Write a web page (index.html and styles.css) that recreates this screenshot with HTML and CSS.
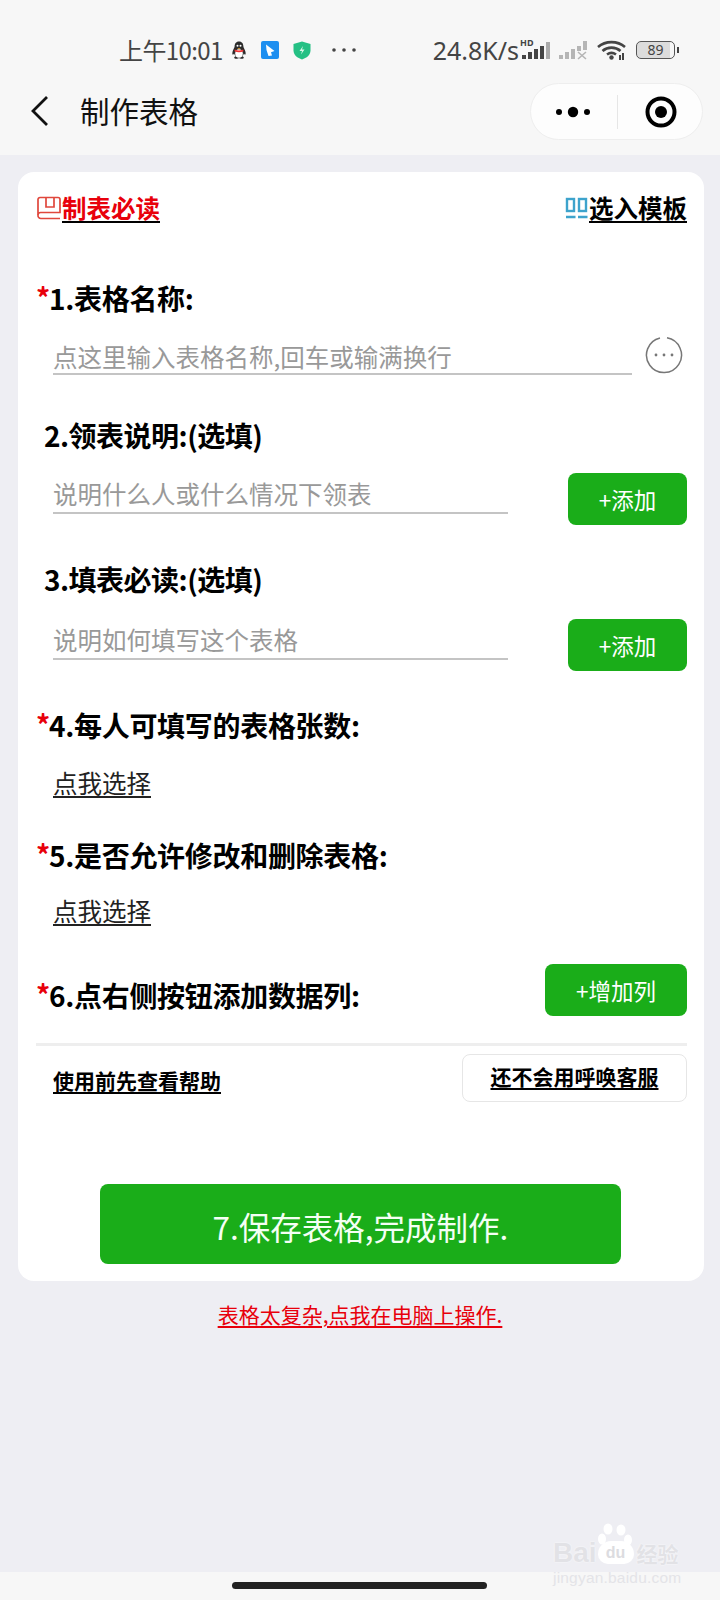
FILE: index.html
```html
<!DOCTYPE html>
<html lang="zh-CN">
<head>
<meta charset="utf-8">
<title>制作表格</title>
<link rel="stylesheet" href="styles.css">
</head>
<body>
<div class="page">
  <header class="top">
    <div class="status">
      <span class="clock">上午10:01</span>
      <svg class="ic-qq" width="16" height="19" viewBox="0 0 16 19"><path d="M8 0.5C4.8 0.5 3.6 3 3.6 5.5 3.6 6.8 2 8.6 1.5 11c-.4 1.8 0 3 .6 2.8l1-1.2c.3 1 .9 2 1.7 2.6-1 .4-1.8 1-1.6 1.8.2.8 2.300 .9 3.600 .5.400-.1.800-.2 1.200-.2s.8.100 1.200.2c1.300.4 3.400.3 3.600-.5.200-.8-.6-1.400-1.600-1.800.8-.6 1.400-1.600 1.700-2.600l1 1.200c.6.200 1-1 .6-2.800C14 8.600 12.400 6.800 12.400 5.500 12.400 3 11.200.5 8 .5z" fill="#2b2b2b"/><ellipse cx="8" cy="12.500" rx="3.800" ry="4.300" fill="#fff"/><path d="M3.800 8.500c2.500 1.300 5.900 1.300 8.400 0l.3 1.800c-2.800 1.200-6.200 1.200-9 0z" fill="#e33"/><path d="M6.300 7.300h3.400L8 8.500z" fill="#f5a623"/><circle cx="6.500" cy="4.800" r="1" fill="#fff"/><circle cx="9.500" cy="4.800" r="1" fill="#fff"/></svg>
      <svg class="ic-blue" width="18" height="18" viewBox="0 0 18 18"><rect width="18" height="18" rx="2" fill="#1e8ff0"/><path d="M5 3.500 13.500 10 10 11.200 11 14.500 7.500 15 5.500 9z" fill="#fff"/></svg>
      <svg class="ic-shield" width="18" height="19" viewBox="0 0 18 19"><path d="M9 0.500 17.500 3V9.500C17.500 14 13.500 17 9 18.500 4.500 17 .5 14 .5 9.500V3z" fill="#25c084"/><path d="M10 5 6.500 10H9L8 13.500 11.500 8.500H9z" fill="#d6f7e8"/></svg>
      <svg class="ic-more" width="24" height="4" viewBox="0 0 24 4"><circle cx="2" cy="2" r="1.800" fill="#444"/><circle cx="12" cy="2" r="1.800" fill="#444"/><circle cx="22" cy="2" r="1.800" fill="#444"/></svg>
      <div class="status-right">
        <span class="speed">24.8K/s</span>
        <div class="sim1-wrap">
          <span class="hd">HD</span>
          <svg class="sim1" width="33" height="20" viewBox="0 0 33 20"><rect x="3" y="15" width="4" height="4" fill="#444"/><rect x="9" y="12" width="4" height="7" fill="#444"/><rect x="15" y="9" width="4" height="10" fill="#444"/><rect x="21" y="6" width="4" height="13" fill="#444"/><rect x="27" y="2" width="4" height="17" fill="#aaa"/></svg>
        </div>
        <svg class="sim2" width="30" height="20" viewBox="0 0 30 20"><rect x="0" y="15" width="4" height="4" fill="#b5b5b5"/><rect x="6" y="12" width="4" height="7" fill="#b5b5b5"/><rect x="12" y="9" width="4" height="10" fill="#b5b5b5"/><rect x="18" y="6" width="4" height="5" fill="#b5b5b5"/><rect x="24" y="1" width="4" height="9" fill="#b5b5b5"/><path d="M19 12l8 7M27 12l-8 7" stroke="#b5b5b5" stroke-width="1.600"/></svg>
        <svg class="wifi" width="29" height="20" viewBox="0 0 29 20"><path d="M1 7C8.500 .5 20.500 .5 28 7" fill="none" stroke="#444" stroke-width="2.600"/><path d="M5.500 11C10.500 6.500 18.500 6.500 23.500 11" fill="none" stroke="#444" stroke-width="2.600"/><path d="M10 14.500c2.700-2 6.300-2 9 0" fill="none" stroke="#444" stroke-width="2.600"/><circle cx="14.500" cy="17.500" r="2.200" fill="#444"/><rect x="22" y="15" width="2" height="5" fill="#444"/><rect x="25" y="13" width="2" height="7" fill="#444"/></svg>
        <div class="battery"><div class="battery-body"><span class="battery-num">89</span></div><div class="battery-tip"></div></div>
      </div>
    </div>
    <div class="nav">
      <svg class="back" width="19" height="32" viewBox="0 0 19 32"><path d="M17 2 3 16l14 14" fill="none" stroke="#111" stroke-width="2.800"/></svg>
      <span class="nav-title">制作表格</span>
      <div class="capsule">
        <svg class="cap-dots" width="34" height="12" viewBox="0 0 34 12"><circle cx="3" cy="6" r="3" fill="#000"/><circle cx="17" cy="6" r="5.200" fill="#000"/><circle cx="31" cy="6" r="3" fill="#000"/></svg>
        <div class="cap-line"></div>
        <svg class="cap-target" width="32" height="32" viewBox="0 0 32 32"><circle cx="16" cy="16" r="13.500" fill="none" stroke="#000" stroke-width="4"/><circle cx="16" cy="16" r="6" fill="#000"/></svg>
      </div>
    </div>
  </header>

  <main class="card">
    <div class="toolbar">
      <div class="tool">
        <svg class="tool-icon" width="25" height="24" viewBox="0 0 25 24"><path d="M2 18.500V3.500A2 2 0 0 1 4 1.500H22A2 2 0 0 1 24 3.500V16.500H4.500A2.500 2.500 0 0 0 2 19 3 3 0 0 0 5 22.500H24" fill="none" stroke="#e0473c" stroke-width="1.700"/><path d="M10 2V11H18V2" fill="none" stroke="#e0473c" stroke-width="1.700"/></svg>
        <a class="tool-link red">制表必读</a>
      </div>
      <div class="tool">
        <svg class="tool-icon" width="23" height="24" viewBox="0 0 23 24"><rect x="2" y="3" width="7" height="12" fill="none" stroke="#3da3cc" stroke-width="2.400"/><rect x="14" y="3" width="7" height="12" fill="none" stroke="#3da3cc" stroke-width="2.400"/><path d="M1 21h9.500M13 21h9.500" stroke="#3da3cc" stroke-width="2.400"/></svg>
        <a class="tool-link">选入模板</a>
      </div>
    </div>

    <h2 class="label label-1"><span class="star">*</span>1.表格名称:</h2>
    <div class="name-row">
      <div class="field field-wide">点这里输入表格名称,回车或输满换行</div>
      <svg class="more-circle" width="38" height="38" viewBox="0 0 38 38"><path d="M22 1.800A17.500 17.500 0 1 1 15 2" fill="none" stroke="#777" stroke-width="1.500"/><circle cx="11" cy="19" r="1.400" fill="#777"/><circle cx="19" cy="19" r="1.400" fill="#777"/><circle cx="27" cy="19" r="1.400" fill="#777"/></svg>
    </div>

    <h2 class="label label-plain label-2">2.领表说明:(选填)</h2>
    <div class="add-row">
      <div class="field field-short">说明什么人或什么情况下领表</div>
      <button class="btn btn-add">+添加</button>
    </div>

    <h2 class="label label-plain label-3">3.填表必读:(选填)</h2>
    <div class="add-row add-row-3">
      <div class="field field-short">说明如何填写这个表格</div>
      <button class="btn btn-add">+添加</button>
    </div>

    <h2 class="label label-4"><span class="star">*</span>4.每人可填写的表格张数:</h2>
    <a class="choice choice-4">点我选择</a>

    <h2 class="label label-5"><span class="star">*</span>5.是否允许修改和删除表格:</h2>
    <a class="choice choice-5">点我选择</a>

    <div class="col-row">
      <h2 class="label label-6"><span class="star">*</span>6.点右侧按钮添加数据列:</h2>
      <button class="btn btn-col">+增加列</button>
    </div>

    <div class="divider"></div>

    <div class="help-row">
      <a class="help-link">使用前先查看帮助</a>
      <button class="service"><span class="service-text">还不会用呼唤客服</span></button>
    </div>

    <button class="save">7.保存表格,完成制作.</button>
  </main>

  <a class="pc-link">表格太复杂,点我在电脑上操作.</a>

  <div class="bottom-bar"><div class="home"></div></div>

  <div class="watermark">
    <svg class="paw" width="40" height="24" viewBox="0 0 40 24"><ellipse cx="12" cy="6" rx="4.500" ry="5.500" fill="#fff"/><ellipse cx="25" cy="7" rx="4.500" ry="5.500" fill="#fff"/><ellipse cx="6" cy="16" rx="4" ry="5.500" fill="#fff"/><ellipse cx="32" cy="17" rx="4" ry="5.500" fill="#fff"/></svg>
    <div class="wm-line"><span class="wm-bai">Bai</span><span class="wm-du">du</span><span class="wm-cn">经验</span></div>
    <div class="wm-url">jingyan.baidu.com</div>
  </div>
</div>
</body>
</html>
```
FILE: styles.css
```css
* { box-sizing: border-box; }
html, body { margin: 0; padding: 0; }
body { font-family: "Noto Sans CJK SC", "Noto Sans", sans-serif; color: #000; background: #eeeef3; }
.page { position: relative; width: 720px; height: 1600px; overflow: hidden; display: flex; flex-direction: column; background: #eeeef3; }
a { display: block; }
button { font-family: inherit; border: 0; margin: 0; padding: 0; }
h2 { margin: 0; }

.top { height: 155px; flex: none; background: #f7f7f7; }
.status { height: 83px; padding: 17px 41px 0 119px; display: flex; align-items: center; color: #444; }
.clock { font-size: 24px; line-height: 34px; width: 105px; white-space: nowrap; letter-spacing: -0.6px; }
.ic-qq { margin-left: 7px; }
.ic-blue { margin-left: 14px; }
.ic-shield { margin-left: 14px; }
.ic-more { margin-left: 21px; }
.status-right { margin-left: auto; display: flex; align-items: center; flex: none; }
.speed { flex: none; font-family: "Noto Sans", sans-serif; font-size: 25px; line-height: 36px; white-space: nowrap; }
.sim1-wrap { position: relative; flex: none; width: 33px; height: 20px; }
.hd { position: absolute; left: 1px; top: -3px; font: 700 9px/12px "Noto Sans", sans-serif; color: #444; white-space: nowrap; }
.sim1 { display: block; }
.sim2 { margin-left: 7px; }
.wifi { margin-left: 8px; }
.battery { margin-left: 10px; display: flex; align-items: center; }
.battery-body { width: 39px; height: 18px; border: 1.500px solid #555; border-radius: 5px; background: linear-gradient(90deg, #dcdcdc 88%, transparent 88%); display: flex; align-items: center; justify-content: center; }
.battery-num { font-family: "Noto Sans", sans-serif; font-size: 14px; line-height: 16px; color: #444; }
.battery-tip { width: 2px; height: 6px; margin-left: 2px; background: #444; }

.nav { height: 72px; display: flex; align-items: center; padding: 0 17px 15px 30px; }
.back { flex: none; margin-top: -1px; }
.nav-title { margin: -3px 0 0 31px; font-size: 29.500px; line-height: 40px; color: #111; }
.capsule { margin-left: auto; width: 173px; height: 57px; border: 1px solid #eeeeee; border-radius: 29px; background: #fdfdfd; display: flex; align-items: center; padding-left: 25px; }
.cap-line { width: 1px; height: 34px; background: #e6e6e6; margin-left: 27px; }
.cap-target { margin-left: 27px; }

.card { flex: none; width: 686px; height: 1109px; margin: 17px 0 0 18px; padding: 20px 17px 0 18px; background: #fff; border-radius: 16px; }
.toolbar { height: 32px; display: flex; justify-content: space-between; align-items: center; }
.tool { display: flex; align-items: center; }
.tool-icon { flex: none; margin-right: 1px; }
.tool-link { font-size: 24.500px; line-height: 32px; font-weight: 700; text-decoration: underline; text-underline-offset: 3px; color: #000; }
.red { color: #e8000b; text-decoration-color: #000; }

.label { font-size: 28px; line-height: 36px; font-weight: 700; white-space: nowrap; letter-spacing: -0.3px; }
.star { display: inline-block; width: 13px; color: #e8000b; font-size: 28px; position: relative; top: -1px; }
.label-plain { padding-left: 8px; letter-spacing: -0.5px; }
.label-1 { margin-top: 56px; }
.label-2 { margin-top: 42px; }
.label-3 { margin-top: 36px; }
.label-4 { margin-top: 36px; }
.label-5 { margin-top: 36px; }

.field { font-size: 24.500px; line-height: 35px; height: 36px; color: #999; border-bottom: 2px solid #c4c4c4; white-space: nowrap; }
.field-wide { width: 579px; }
.field-short { width: 455px; margin-top: 5px; line-height: 31px; }

.name-row { margin: 23px 0 0 17px; display: flex; }
.more-circle { margin: -3px 0 0 13px; }

.add-row { margin: 20px 0 0 17px; display: flex; justify-content: space-between; }
.add-row-3 { margin-top: 22px; }
.btn { height: 52px; background: #1aad19; color: #fff; font-size: 22.500px; border-radius: 8px; }
.btn-add { width: 119px; }
.btn-col { width: 142px; }

.choice { font-size: 24.500px; line-height: 36px; width: max-content; margin-left: 17px; text-decoration: underline; text-underline-offset: 3px; color: #222; }
.choice-4 { margin-top: 22px; }
.choice-5 { margin-top: 20px; }

.col-row { margin-top: 35px; display: flex; justify-content: space-between; }
.label-6 { margin-top: 13px; }

.divider { height: 3px; margin-top: 27px; background: #eeeeee; }

.help-row { margin-top: 8px; display: flex; justify-content: space-between; }
.help-link { margin: 11px 0 0 17px; font-size: 21px; line-height: 30px; font-weight: 700; text-decoration: underline; text-underline-offset: 3px; }
.service { width: 225px; height: 48px; padding-bottom: 4px; background: #fff; border: 1px solid #e6e6e6; border-radius: 8px; font-size: 21px; font-weight: 700; color: #000; text-align: center; }
.service-text { text-decoration: underline; text-underline-offset: 3px; }

.save { display: block; width: 521px; height: 80px; margin: 82px 0 0 64px; padding-top: 3px; background: #1aad19; color: #f4fff4; font-size: 31.500px; border-radius: 8px; }

.pc-link { flex: none; margin-top: 18px; text-align: center; font-size: 21px; line-height: 30px; color: #e8000b; text-decoration: underline; text-underline-offset: 3px; }

.bottom-bar { position: absolute; left: 0; right: 0; bottom: 0; height: 28px; background: #f7f7f7; }
.home { position: absolute; left: 232px; top: 10px; width: 255px; height: 7px; border-radius: 4px; background: #222; }

.watermark { position: absolute; left: 553px; top: 1523px; width: 130px; color: #e2e2e6; }
.paw { display: block; margin-left: 43px; }
.wm-line { display: flex; align-items: flex-start; margin-top: -6px; height: 24px; text-shadow: 0 0 2px #fff; }
.wm-bai { font: 700 28px/24px "Liberation Sans", sans-serif; }
.wm-du { width: 36px; height: 23px; margin-left: 1px; font: 700 16px/24px "Liberation Sans", sans-serif; text-align: center; color: #dcdce0; background: #fff; border-radius: 16px 16px 12px 12px; }
.wm-cn { font-size: 21px; line-height: 24px; margin-left: 3px; font-weight: 700; white-space: nowrap; }
.wm-url { margin-top: 4px; font: 400 15.500px/18px "Liberation Sans", sans-serif; letter-spacing: 0.2px; white-space: nowrap; color: #e4e4e8; }
```
